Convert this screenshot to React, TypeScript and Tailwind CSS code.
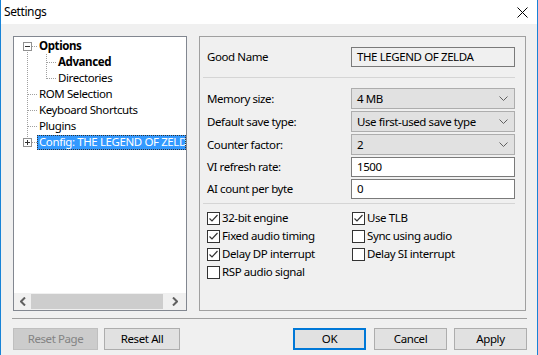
import React from "react";

const font = { fontFamily: '"Noto Sans", "Segoe UI", sans-serif' };

function Gutter({ box, root, child }: { box?: "minus" | "plus"; root: "full" | "bottom" | "top"; child?: "mid" | "last" }) {
  const w = child ? 42 : 23;
  const dot = { stroke: "#a0a0a0", strokeWidth: 1, strokeDasharray: "1 1" };
  const y1 = root === "bottom" ? 12 : 0;
  const y2 = root === "top" ? 4 : 16;
  return (
    <svg width={w} height={16} className="shrink-0" shapeRendering="crispEdges">
      <line x1={13.5} y1={y1} x2={13.5} y2={y2} {...dot} />
      {box ? (
        <>
          <line x1={18} y1={8.5} x2={23} y2={8.5} {...dot} />
          <rect x={9.5} y={4.5} width={8} height={8} fill="#fff" stroke="#919191" />
          <line x1={11} y1={8.5} x2={16} y2={8.5} stroke="#333" />
          {box === "plus" && <line x1={13.5} y1={6} x2={13.5} y2={11} stroke="#333" />}
        </>
      ) : !child ? (
        <line x1={14} y1={8.5} x2={23} y2={8.5} {...dot} />
      ) : (
        <>
          <line x1={32.5} y1={0} x2={32.5} y2={child === "last" ? 9 : 16} {...dot} />
          <line x1={33} y1={8.5} x2={42} y2={8.5} {...dot} />
        </>
      )}
    </svg>
  );
}

function TreeRow({ label, bold, selected, ...g }: { label: string; bold?: boolean; selected?: boolean; box?: "minus" | "plus"; root: "full" | "bottom" | "top"; child?: "mid" | "last" }) {
  return (
    <div className="flex items-center h-[16px] whitespace-nowrap overflow-hidden">
      <Gutter {...g} />
      <span
        className={`px-[2px] h-[15px] leading-[14px] overflow-hidden ${bold ? "font-bold" : ""} ${
          selected ? "bg-[#3399ff] text-white outline-1 outline-dotted outline-[#333] -outline-offset-1" : "text-black"
        }`}
      >
        {label}
      </span>
    </div>
  );
}

function Dropdown({ value }: { value: string }) {
  return (
    <div className="w-[164px] h-[21px] border border-[#adadad] bg-[#e1e1e1] flex items-center justify-between pl-[5px] pr-[6px]">
      <span>{value}</span>
      <svg width="9" height="6" viewBox="0 0 9 6">
        <path d="M0.5 0.5 L4.5 4.5 L8.5 0.5" fill="none" stroke="#606060" strokeWidth="1" />
      </svg>
    </div>
  );
}

function Check({ label, checked }: { label: string; checked?: boolean }) {
  return (
    <div className="flex items-center gap-[2px] h-[18px]">
      <div className="w-[13px] h-[13px] border border-[#333] bg-white flex items-center justify-center">
        {checked && (
          <svg width="11" height="11" viewBox="0 0 11 11">
            <path d="M1.5 5.5 L4 8 L9.5 2" fill="none" stroke="#333" strokeWidth="1.2" />
          </svg>
        )}
      </div>
      <span>{label}</span>
    </div>
  );
}

function Btn({ label, w, disabled, primary }: { label: string; w: string; disabled?: boolean; primary?: boolean }) {
  return (
    <div
      className={`${w} h-[22px] flex items-center justify-center ${
        disabled
          ? "bg-[#cccccc] border border-[#bfbfbf] text-[#838383]"
          : primary
          ? "bg-[#e1e1e1] border-2 border-[#0078d7] text-black"
          : "bg-[#e1e1e1] border border-[#adadad] text-black"
      }`}
    >
      {label}
    </div>
  );
}

export default function App() {
  return (
    <div style={font} className="w-[538px] h-[355px] bg-[#f0f0f0] border-x border-[#1883d7] flex flex-col text-[11.5px] tracking-[-0.4px] text-black overflow-hidden">
      {/* title bar */}
      <div className="h-[24px] bg-white flex items-center justify-between pl-[3px] pr-[9px] shrink-0">
        <span className="text-[12px]">Settings</span>
        <svg width="11" height="11" viewBox="0 0 11 11">
          <path d="M0.5 0.5 L10.5 10.5 M10.5 0.5 L0.5 10.5" stroke="#000" strokeWidth="1" />
        </svg>
      </div>

      <div className="flex pt-[12px] pl-[12px] gap-[12px]">
        {/* tree */}
        <div className="w-[174px] h-[275px] border border-[#828790] bg-white flex flex-col overflow-hidden">
          <div className="flex-1 pt-[1px] overflow-hidden">
            <TreeRow label="Options" bold box="minus" root="bottom" />
            <TreeRow label="Advanced" bold root="full" child="mid" />
            <TreeRow label="Directories" root="full" child="last" />
            <TreeRow label="ROM Selection" root="full" />
            <TreeRow label="Keyboard Shortcuts" root="full" />
            <TreeRow label="Plugins" root="full" />
            <TreeRow label="Config: THE LEGEND OF ZELDA" selected box="plus" root="top" />
          </div>
          <div className="h-[17px] bg-[#f0f0f0] flex items-center shrink-0">
            <div className="w-[17px] flex justify-center">
              <svg width="6" height="9" viewBox="0 0 6 9">
                <path d="M5 0.5 L1 4.5 L5 8.5" fill="none" stroke="#606060" strokeWidth="2" />
              </svg>
            </div>
            <div className="w-[132px] h-[15px] bg-[#cdcdcd]" />
            <div className="flex-1 flex justify-center">
              <svg width="6" height="9" viewBox="0 0 6 9">
                <path d="M1 0.5 L5 4.5 L1 8.5" fill="none" stroke="#606060" strokeWidth="2" />
              </svg>
            </div>
          </div>
        </div>

        {/* settings panel */}
        <div className="w-[327px] h-[275px] border border-[#a0a0a0] pt-[10px] pl-[7px] pr-[10px] flex flex-col">
          <div className="flex items-center h-[20px]">
            <span className="w-[144px]">Good Name</span>
            <div className="w-[164px] h-[20px] border border-[#7a7a7a] flex items-center pl-[5px]">THE LEGEND OF ZELDA</div>
          </div>
          <div className="h-px bg-[#d5d5d5] -ml-[4px] mt-[10px]" />
          <div className="flex flex-col gap-[2px] mt-[10px]">
            {[
              ["Memory size:", "4 MB"],
              ["Default save type:", "Use first-used save type"],
              ["Counter factor:", "2"],
            ].map(([l, v]) => (
              <div key={l} className="flex items-center">
                <span className="w-[144px]">{l}</span>
                <Dropdown value={v} />
              </div>
            ))}
            {[
              ["VI refresh rate:", "1500"],
              ["AI count per byte", "0"],
            ].map(([l, v]) => (
              <div key={l} className="flex items-center">
                <span className="w-[144px]">{l}</span>
                <div className="w-[164px] h-[20px] border border-[#7a7a7a] bg-white flex items-center pl-[5px]">{v}</div>
              </div>
            ))}
          </div>
          <div className="h-px bg-[#d5d5d5] -ml-[4px] mt-[4px]" />
          <div className="grid grid-cols-[145px_1fr] mt-[5px]">
            <Check label="32-bit engine" checked />
            <Check label="Use TLB" checked />
            <Check label="Fixed audio timing" checked />
            <Check label="Sync using audio" />
            <Check label="Delay DP interrupt" checked />
            <Check label="Delay SI interrupt" />
            <Check label="RSP audio signal" />
          </div>
        </div>
      </div>

      <div className="h-px bg-[#a0a0a0] ml-[11px] w-[515px] mt-[7px]" />

      <div className="flex items-center mt-[9px] pl-[12px]">
        <Btn label="Reset Page" w="w-[85px]" disabled />
        <div className="ml-[6px]">
          <Btn label="Reset All" w="w-[76px]" />
        </div>
        <div className="ml-[113px]">
          <Btn label="OK" w="w-[73px]" primary />
        </div>
        <div className="ml-[8px]">
          <Btn label="Cancel" w="w-[73px]" />
        </div>
        <div className="ml-[7px]">
          <Btn label="Apply" w="w-[73px]" />
        </div>
      </div>
    </div>
  );
}
